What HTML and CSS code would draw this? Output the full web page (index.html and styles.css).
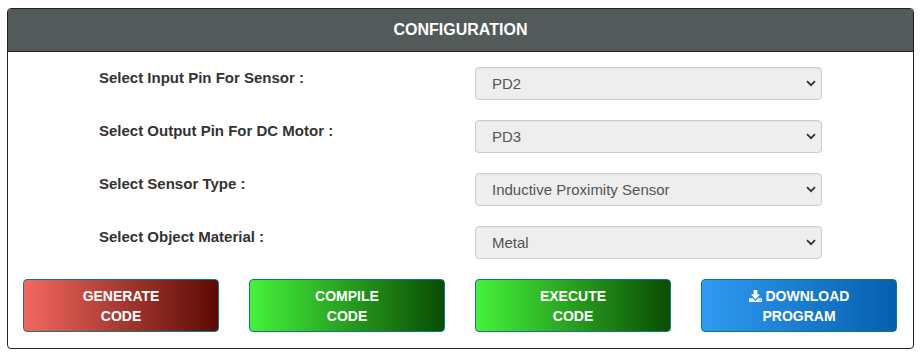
FILE: index.html
```html
<!DOCTYPE html>
<html>
<head>
<meta charset="utf-8">
<link rel="stylesheet" href="styles.css">
</head>
<body>
<div class="card">
  <div class="card-header">CONFIGURATION</div>
  <div class="card-body">
    <div class="row">
      <label class="label">Select Input Pin For Sensor :</label>
      <div class="field"><select class="select"><option>PD2</option></select></div>
    </div>
    <div class="row">
      <label class="label">Select Output Pin For DC Motor :</label>
      <div class="field"><select class="select"><option>PD3</option></select></div>
    </div>
    <div class="row">
      <label class="label">Select Sensor Type :</label>
      <div class="field"><select class="select"><option>Inductive Proximity Sensor</option></select></div>
    </div>
    <div class="row">
      <label class="label">Select Object Material :</label>
      <div class="field"><select class="select"><option>Metal</option></select></div>
    </div>
    <div class="buttons">
      <div class="btn-col"><button class="btn btn-red">GENERATE<br>CODE</button></div>
      <div class="btn-col"><button class="btn btn-green">COMPILE<br>CODE</button></div>
      <div class="btn-col"><button class="btn btn-green">EXECUTE<br>CODE</button></div>
      <div class="btn-col"><button class="btn btn-blue"><svg class="dl" viewBox="0 0 14 13" width="13" height="12"><path d="M5 0h4v5h3L7 10 2 5h3z" fill="#fff"/><path d="M0 9h4l3 3 3-3h4v4H0z" fill="#fff"/><rect x="10.5" y="10.5" width="1" height="1" fill="#2a7fd6"/><rect x="12" y="10.5" width="1" height="1" fill="#2a7fd6"/></svg> DOWNLOAD<br>PROGRAM</button></div>
    </div>
  </div>
</div>
</body>
</html>
```
FILE: styles.css
```css
html, body {
  margin: 0;
  padding: 0;
  background: #fff;
}
body {
  padding: 8px 0 0 7px;
  font-family: "Liberation Sans", Arial, sans-serif;
}
.card {
  width: 905px;
  border: 1px solid #222;
  border-radius: 4px;
  overflow: hidden;
}
.card-header {
  background: #525a5a;
  color: #fff;
  font-weight: bold;
  font-size: 16px;
  line-height: 20px;
  height: 43px;
  box-sizing: border-box;
  padding-top: 11px;
  text-align: center;
  border-bottom: 1px solid #222;
}
.card-body {
  padding: 15px 0 16px 0;
}
.row {
  display: grid;
  grid-template-columns: 452px 453px;
  margin-bottom: 20px;
}
.label {
  padding-left: 91px;
  padding-top: 1px;
  font-weight: bold;
  font-size: 15px;
  line-height: 20px;
  color: #333;
}
.field {
  padding-left: 15px;
}
.select {
  appearance: none;
  -webkit-appearance: none;
  width: 347px;
  height: 33px;
  box-sizing: border-box;
  border: 1px solid #ccc;
  border-radius: 4px;
  background-color: #eee;
  background-image: url("data:image/svg+xml;utf8,<svg xmlns='http://www.w3.org/2000/svg' width='10' height='7' viewBox='0 0 10 7'><path d='M1 1.2l4 4 4-4' fill='none' stroke='%23333' stroke-width='1.8'/></svg>");
  background-repeat: no-repeat;
  background-position: right 5px center;
  padding: 0 0 0 16px;
  font-family: "Liberation Sans", Arial, sans-serif;
  font-size: 15px;
  color: #555;
  box-shadow: inset 0 1px 1px rgba(0,0,0,0.04);
}
.buttons {
  display: grid;
  grid-template-columns: repeat(4, 226px);
  margin-top: 1px;
}
.btn-col {
  padding: 0 15px;
}
.btn {
  width: 196px;
  height: 53px;
  box-sizing: border-box;
  border: 1px solid #0e7b7b;
  border-radius: 4px;
  padding: 5px 12px;
  color: #fff;
  font-family: "Liberation Sans", Arial, sans-serif;
  font-weight: bold;
  font-size: 14px;
  line-height: 20px;
  text-align: center;
  cursor: pointer;
}
.btn-red {
  background: linear-gradient(to right, #f2685f, #5c0a04);
}
.btn-green {
  background: linear-gradient(to right, #45f23b, #0a4c03);
}
.btn-blue {
  background: linear-gradient(to right, #2f9bf2, #055fae);
}
.dl {
  vertical-align: -1px;
}
```
